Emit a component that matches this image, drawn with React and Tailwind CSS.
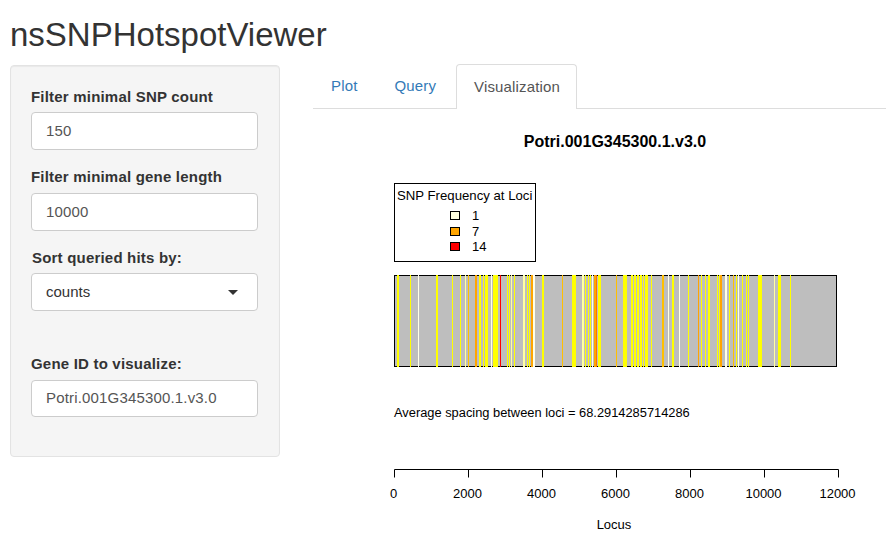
const Y = "#ffff00";
const P = "#ffffa0";
const W = "#ffffe8";
const O = "#ffc000";
const D = "#ffa500";
const F = "#ff7000";
const R = "#ff0000";

// [x, width, colour] in page pixels
const bars = [
  [397, 2, Y], [410, 1, Y], [418, 1, W], [436, 2, Y], [452, 1, Y], [460, 1, Y], [465, 1, P], [468, 1, O],
  [475, 2, D], [479, 2, Y], [483, 1, Y], [485, 3, Y], [491, 1, W], [493, 5, Y], [500, 1, R], [507, 1, Y],
  [509, 1, Y], [511, 1, P], [514, 1, Y], [523, 2, P], [527, 1, Y], [529, 1, Y], [531, 2, D], [533, 2, W],
  [542, 1, Y], [543, 1, Y], [562, 1, O], [572, 2, Y], [574, 1, Y], [575, 1, Y], [582, 2, P], [585, 1, Y],
  [588, 1, Y], [590, 1, Y], [592, 1, W], [594, 2, D], [596, 1, F], [598, 2, Y], [600, 1, Y], [616, 1, O],
  [623, 3, Y], [626, 1, Y], [631, 2, Y], [634, 2, Y], [637, 2, Y], [640, 2, Y], [643, 1, Y], [645, 3, Y],
  [651, 1, Y], [662, 2, O], [668, 1, W], [672, 2, Y], [679, 1, W], [688, 1, Y], [698, 1, D], [701, 1, Y],
  [705, 1, Y], [708, 2, Y], [717, 1, Y], [719, 1, Y], [720, 2, D], [725, 2, W], [729, 1, Y], [733, 1, O],
  [736, 1, Y], [738, 1, W], [742, 1, Y], [746, 1, Y], [748, 1, Y], [758, 4, Y], [774, 1, P], [778, 3, Y],
  [790, 1, Y],
];

const ticks = [0, 2000, 4000, 6000, 8000, 10000, 12000];

function Field({ label, value, className = "", gap = "mb-[5px]", height = "h-[38px]" }) {
  return (
    <div className={className}>
      <label className={`block font-bold text-[#333] tracking-[0.2px] leading-[21px] ${gap}`}>{label}</label>
      <div className={`${height} bg-white border border-[#ccc] rounded-[4px] px-[14px] flex items-center text-[#555] tracking-[0.17px]`}>
        {value}
      </div>
    </div>
  );
}

function Plot() {
  return (
    <svg viewBox="313 109 573 431" width="573" height="431" className="block" fontFamily="'Liberation Sans', Arial, sans-serif" fontSize="13">
      <text x="615" y="147" textAnchor="middle" fontWeight="bold" fontSize="16">Potri.001G345300.1.v3.0</text>

      <rect x="394.5" y="183.5" width="141" height="78" fill="#fff" stroke="#000" />
      <text x="397" y="200" fontSize="13.2">SNP Frequency at Loci</text>
      <rect x="450.5" y="211.5" width="9" height="8" fill="#ffffe0" stroke="#000" />
      <rect x="450.5" y="227.5" width="9" height="8" fill="#ffa500" stroke="#000" />
      <rect x="450.5" y="242.5" width="9" height="8" fill="#ff0000" stroke="#000" />
      <text x="472" y="220">1</text>
      <text x="472" y="236">7</text>
      <text x="472" y="251">14</text>

      <rect x="394.5" y="275.5" width="442" height="91" fill="#bebebe" stroke="#000" />
      {bars.map(([x, w, c], i) => (
        <rect key={i} x={x} y="275" width={w} height="92" fill={c} />
      ))}

      <text x="394" y="417" fontSize="12.85">Average spacing between loci = 68.2914285714286</text>

      <path d="M394.5 469.5H838.5" stroke="#000" fill="none" />
      {ticks.map((t, i) => {
        const x = 394.5 + i * 74;
        return (
          <g key={t}>
            <path d={`M${x} 469.5V477.5`} stroke="#000" fill="none" />
            <text x={x - 1} y="498" textAnchor="middle">{t}</text>
          </g>
        );
      })}
      <text x="614" y="529" textAnchor="middle">Locus</text>
    </svg>
  );
}

export default function App() {
  return (
    <div className="w-[894px] h-[540px] overflow-hidden bg-white text-[15px] text-[#333] font-['Liberation_Sans',Arial,sans-serif]">
      <h2 className="ml-[10px] mt-[15px] mb-[10px] text-[33px] leading-[40px] font-normal">nsSNPHotspotViewer</h2>
      <div className="flex items-start">
        <div className="w-[270px] h-[392px] ml-[10px] bg-[#f5f5f5] border border-[#e3e3e3] rounded-[4px] pl-[20px] pr-[21px] pt-[20px] shadow-[inset_0_1px_1px_rgba(0,0,0,0.05)]">
          <Field label="Filter minimal SNP count" value="150" />
          <Field label="Filter minimal gene length" value="10000" className="mt-[16px]" gap="mb-[6px]" />
          <div className="mt-[16px]">
            <label className="block font-bold tracking-[0.2px] mb-[5px] leading-[21px] pl-px">Sort queried hits by:</label>
            <div className="h-[38px] bg-white border border-[#ccc] rounded-[4px] pl-[14px] pr-[19px] flex items-center justify-between text-[#333]">
              <span>counts</span>
              <span className="w-0 h-0 border-x-[5px] border-x-transparent border-t-[5px] border-t-[#333]" />
            </div>
          </div>
          <Field label="Gene ID to visualize:" value="Potri.001G345300.1.v3.0" className="mt-[42px]" gap="mb-[6px]" height="h-[37px]" />
        </div>
        <div className="ml-[33px] w-[573px]">
          <div className="flex h-[45px] border-b border-[#ddd] -mt-px text-[#337ab7] tracking-[0.15px]">
            <div className="px-[18px] pt-[11px]">Plot</div>
            <div className="pl-[19px] pr-[20px] pt-[11px]">Query</div>
            <div className="h-[45px] w-[121px] px-[17px] pt-[11px] bg-white border border-[#ddd] border-b-0 rounded-t-[4px] text-[#555]">Visualization</div>
          </div>
          <Plot />
        </div>
      </div>
    </div>
  );
}
